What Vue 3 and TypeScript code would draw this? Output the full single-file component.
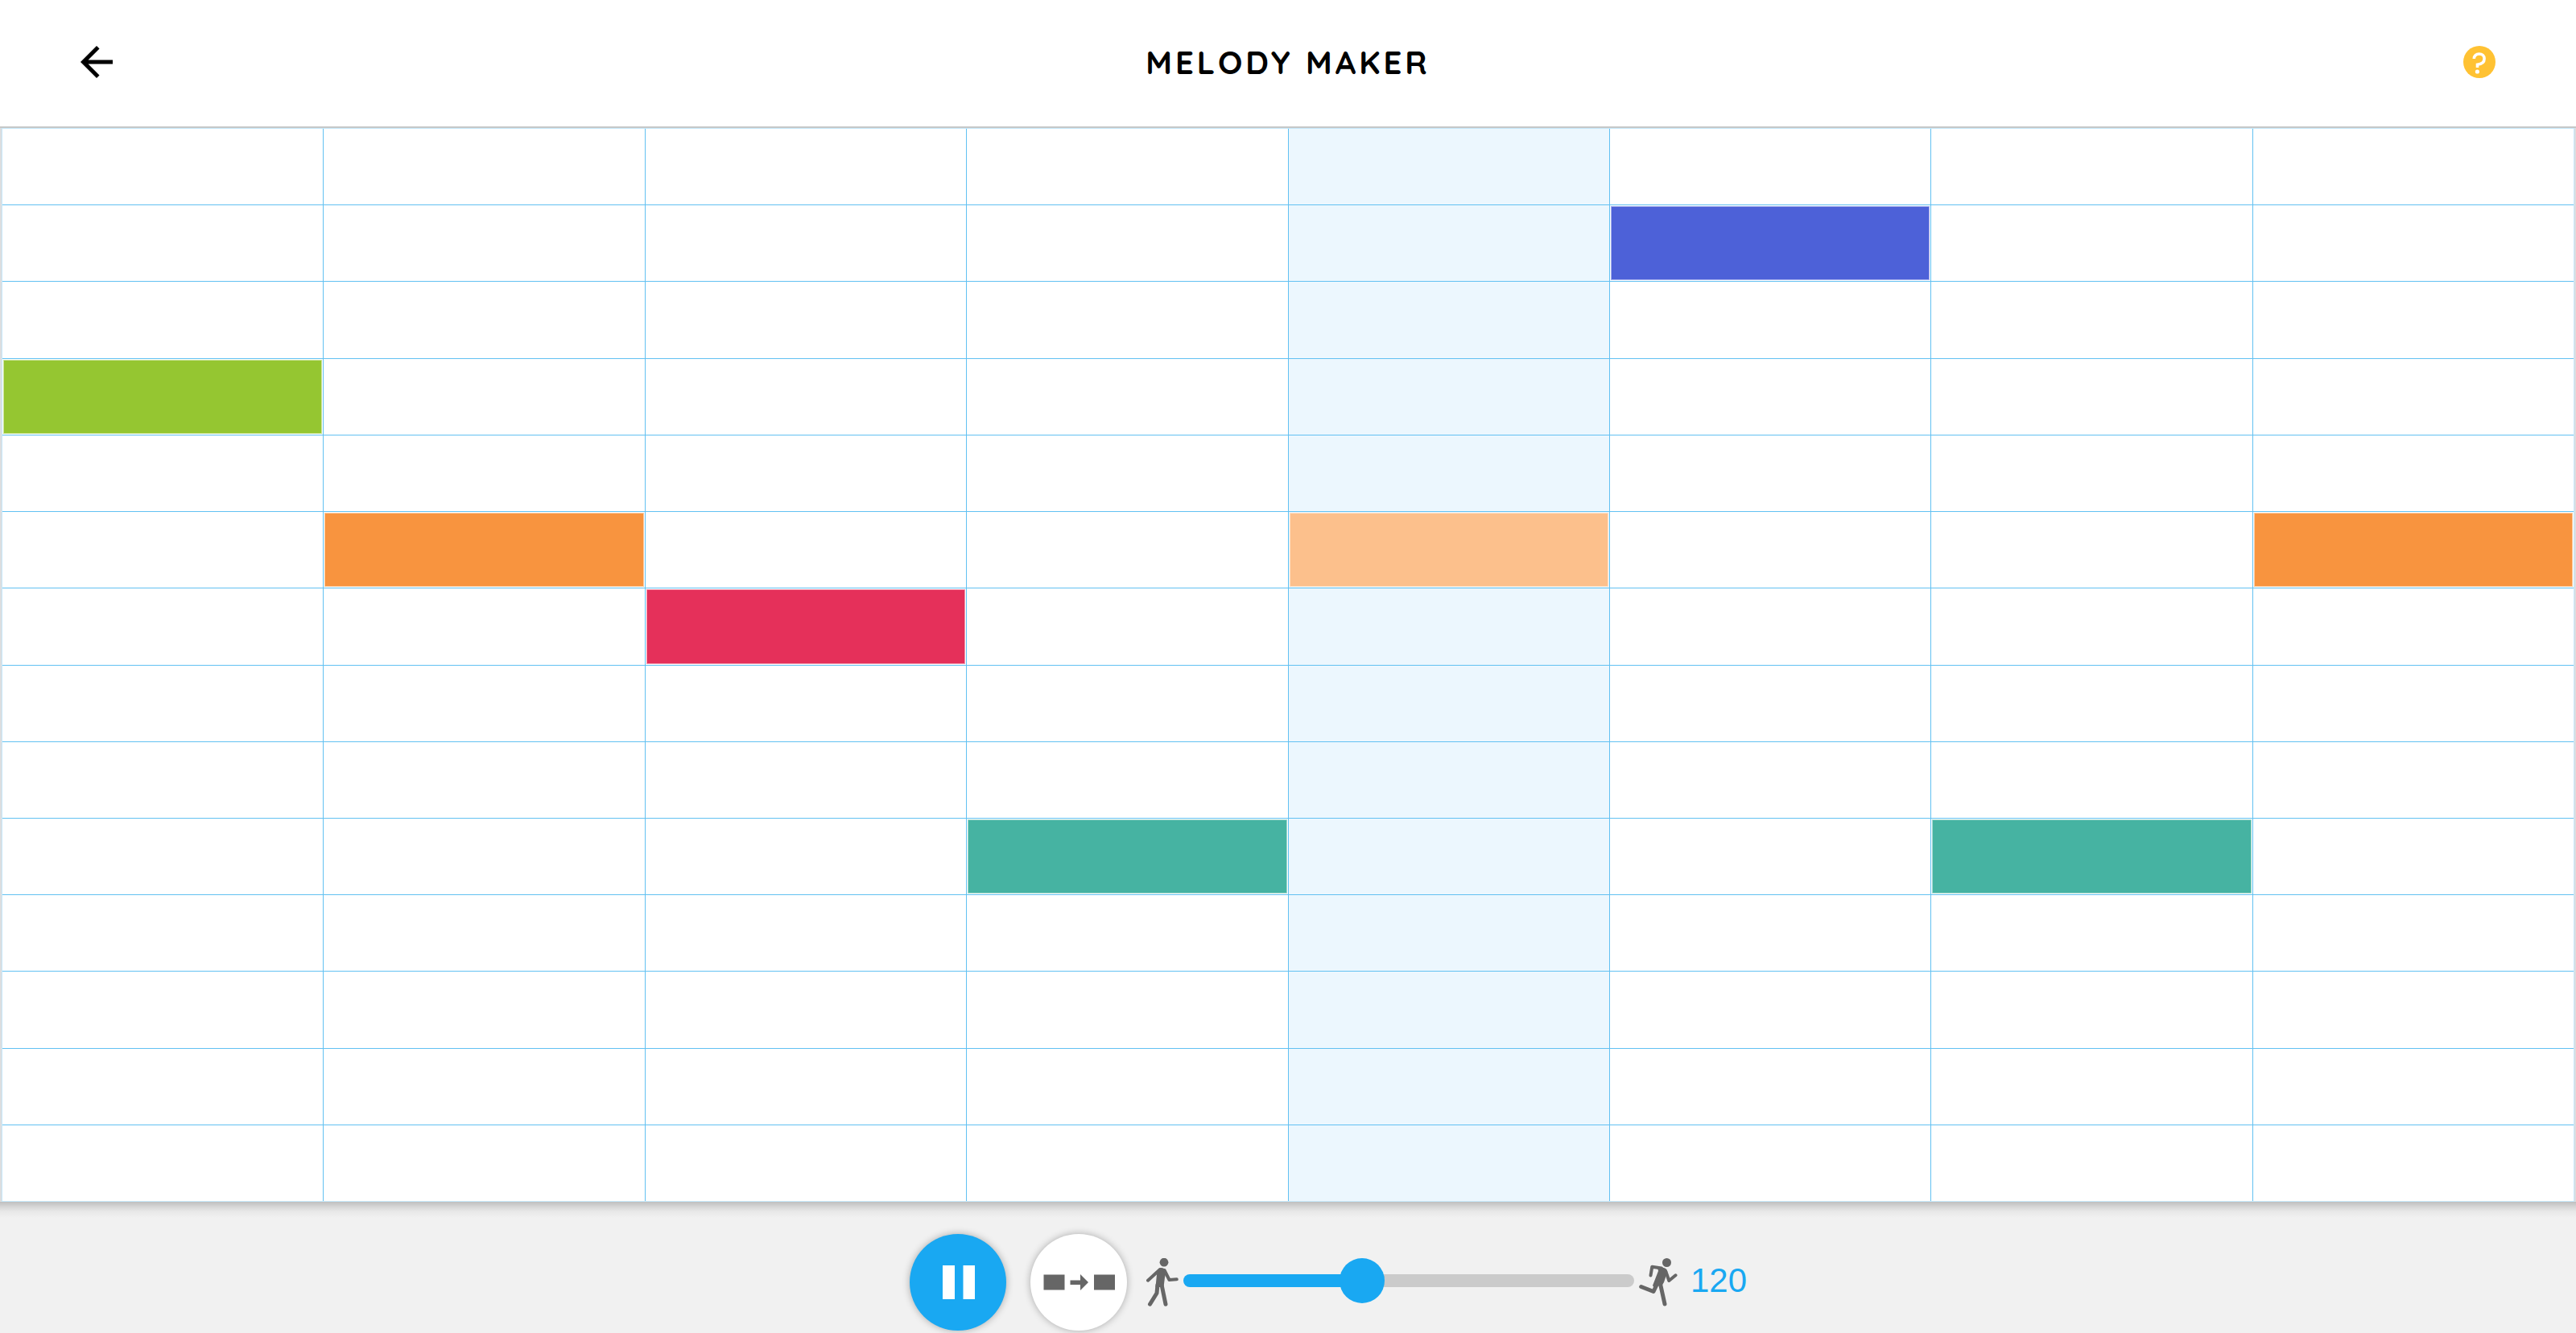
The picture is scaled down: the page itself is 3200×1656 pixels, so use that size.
<script setup lang="ts">
import { ref } from 'vue'

const rows = 14
const activeColumn = 4
const tempo = ref(120)
const minTempo = 20
const maxTempo = 280

interface Note { row: number; color: string }

const notes = ref<Note[]>([
  { row: 3, color: '#95c631' },
  { row: 5, color: '#f8943f' },
  { row: 6, color: '#e5305a' },
  { row: 9, color: '#46b3a2' },
  { row: 5, color: '#fcc08c' },
  { row: 1, color: '#4d61d8' },
  { row: 9, color: '#46b3a2' },
  { row: 5, color: '#f8943f' },
])
</script>

<template>
  <div class="app">
    <header class="top">
      <button class="icon-button" type="button" aria-label="Back">
        <svg width="60" height="60" viewBox="0 0 24 24"><path d="M20 11H7.83l5.59-5.59L12 4l-8 8 8 8 1.41-1.41L7.83 13H20v-2z" /></svg>
      </button>
      <h1>MELODY MAKER</h1>
      <button class="icon-button" type="button" aria-label="Help">
        <svg width="40" height="40" viewBox="0 0 40 40">
          <circle cx="20" cy="20" r="20" fill="#ffc233" />
          <path d="M13.3 16C13.3 12.3 16 10 19.7 10C23.5 10 26.1 12.3 26.1 16C26.1 20.5 22.5 22.7 17.5 23.3V27" fill="none" stroke="#fff" stroke-width="3.6" />
          <circle cx="17.4" cy="32" r="2.6" fill="#fff" />
        </svg>
      </button>
    </header>

    <main class="stage">
      <div class="grid">
        <div v-for="(note, c) in notes" :key="c" class="column" :class="{ active: c === activeColumn }">
          <button
            v-for="r in rows"
            :key="r"
            type="button"
            class="cell"
            :aria-label="`Beat ${c + 1}, pitch ${rows - r + 1}`"
            :aria-pressed="note.row === r - 1"
          >
            <span v-if="note.row === r - 1" class="note" :style="{ backgroundColor: note.color }"></span>
          </button>
        </div>
      </div>
    </main>

    <footer class="controls">
      <button class="round play" type="button" aria-label="Pause">
        <svg width="120" height="120" viewBox="0 0 120 120" fill="#fff"><path d="M41 39h15v42H41zM66.5 39h14.5v42H66.5z" /></svg>
      </button>
      <button class="round pattern" type="button" aria-label="Note pattern">
        <svg width="120" height="120" viewBox="0 0 120 120" fill="#666"><path d="M16.5 50.5h26v19h-26zM79 50.5h26v19H79zM49.5 57.5H62v-7.5l10 10-10 10v-7H49.5z" /></svg>
      </button>
      <div class="tempo">
        <svg width="40" height="60" viewBox="0 0 40 60" fill="none" stroke="#666" stroke-linecap="round" stroke-linejoin="round">
          <circle cx="22" cy="5.2" r="5.4" fill="#666" stroke="none" />
          <path d="M15.5 13Q18.5 11 22 13L24.5 17.5L23 24L21.5 36H11.5L13 20Z" fill="#666" stroke="none" />
          <path d="M17 14L2 27.7" stroke-width="4" />
          <path d="M22.5 15L28.5 27L37.8 26.3" stroke-width="4" />
          <path d="M14 33L13 43.5L4.5 57.2M19 33L24 57.2" stroke-width="5" />
        </svg>
        <input
          v-model.number="tempo"
          type="range"
          :min="minTempo"
          :max="maxTempo"
          aria-label="Tempo"
          :style="{ '--fill': `${((tempo - minTempo) / (maxTempo - minTempo)) * 100}%` }"
        />
        <svg width="48" height="60" viewBox="0 0 48 60" fill="none" stroke="#666" stroke-linecap="round" stroke-linejoin="round">
          <circle cx="34.5" cy="5.5" r="5.5" fill="#666" stroke="none" />
          <path d="M23 11.5L31 12Q36 13.5 35 18L31 30L28 35L23 34L20 39L17 34L24 16Z" fill="#666" stroke="none" />
          <path d="M28 12.5L16.3 10.7L14.5 21.5" stroke-width="4" />
          <path d="M33.5 17L37.3 28L45.5 21.3" stroke-width="4" />
          <path d="M23 31L18 41.5L2.7 35.5M26.5 32L32 57" stroke-width="5" />
        </svg>
        <output>{{ tempo }}</output>
      </div>
    </footer>
  </div>
</template>

<style>
body {
  margin: 0;
}
</style>

<style scoped>
.app {
  display: flex;
  flex-direction: column;
  min-height: 100vh;
  background: #f1f1f1;
  font-family: "Liberation Sans", Arial, sans-serif;
}
button {
  margin: 0;
  padding: 0;
  border: 0;
  background: none;
  cursor: pointer;
}
svg {
  display: block;
}
.top {
  display: flex;
  align-items: center;
  justify-content: space-between;
  box-sizing: border-box;
  height: 157px;
  padding: 0 90px 3px;
  background: #fff;
}
.icon-button {
  display: flex;
  align-items: center;
  justify-content: center;
  width: 60px;
  height: 60px;
}
h1 {
  margin: 0;
  font-family: Quicksand, Lato, sans-serif;
  font-size: 40px;
  font-weight: 700;
  line-height: 48px;
  letter-spacing: 4px;
  color: #000;
}
.stage {
  display: flex;
  flex: 1;
  padding: 0 2px;
  border-top: 2px solid #c6c8c8;
  background: #dcdedf;
}
.grid {
  display: flex;
  flex: 1;
  border: 1px solid #c6e8fa;
  background: #fff;
}
.column {
  display: flex;
  flex: 1 1 0;
  flex-direction: column;
}
.column + .column {
  border-left: 1px solid #62c1f2;
}
.active {
  background: #ecf7fe;
}
.cell {
  display: flex;
  flex: 1 1 0;
  padding: 1px;
}
.cell + .cell {
  border-top: 1px solid #62c1f2;
}
.note {
  flex: 1;
  align-self: stretch;
  border: 1px solid rgba(255, 255, 255, 0.5);
}
.controls {
  display: flex;
  align-items: center;
  justify-content: center;
  gap: 30px;
  padding: 40px 0 3px 100px;
  background: linear-gradient(#bebebe, #d6d6d6 6px, #e8e8e8 12px, #f1f1f1 20px);
}
.round {
  width: 120px;
  height: 120px;
  border-radius: 50%;
  box-shadow: 0 0 10px rgba(0, 0, 0, 0.3);
}
.play {
  background: #19a8f2;
}
.pattern {
  background: #fff;
}
.tempo {
  display: flex;
  align-items: center;
  gap: 6px;
  margin-left: -6px;
}
input {
  appearance: none;
  width: 560px;
  height: 56px;
  margin: 0 0 4px;
  background: none;
}
input::-webkit-slider-runnable-track {
  height: 16px;
  border-radius: 8px;
  background: linear-gradient(to right, #19a8f2 var(--fill), #cbcbcb var(--fill));
}
input::-webkit-slider-thumb {
  appearance: none;
  width: 56px;
  height: 56px;
  margin-top: -20px;
  border-radius: 50%;
  background: #19a8f2;
}
output {
  margin: 0 0 4px 10px;
  font-size: 42px;
  line-height: 48px;
  color: #19a8f2;
}
</style>
